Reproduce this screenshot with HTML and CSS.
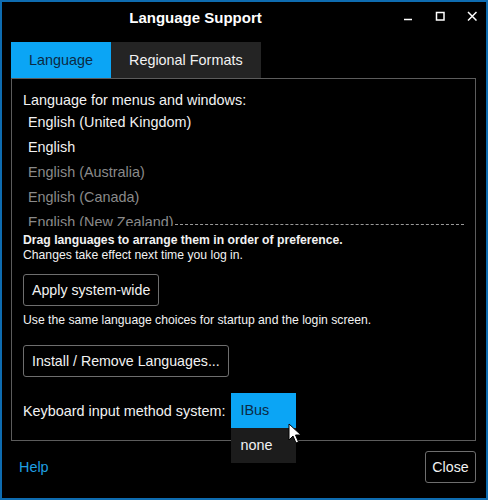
FILE: index.html
```html
<!DOCTYPE html>
<html lang="en">
<head>
    <meta charset="UTF-8">
    <title>Language Support</title>
    <link rel="stylesheet" href="styles.css">
</head>
<body>
    <div class="window">
        <div class="titlebar">
            <div class="title">Language Support</div>
            <div class="controls">
                <svg class="ctl" width="10" height="10" viewBox="0 0 10 10"><line x1="1" y1="8.5" x2="9" y2="8.5" stroke="#fff" stroke-width="1.5"/></svg>
                <svg class="ctl" width="10" height="10" viewBox="0 0 10 10"><rect x="1.5" y="1.5" width="7.5" height="7.5" fill="none" stroke="#fff" stroke-width="1.5"/></svg>
                <svg class="ctl" width="10" height="10" viewBox="0 0 10 10"><path d="M1 1 L9.5 9.5 M9.5 1 L1 9.5" stroke="#fff" stroke-width="1.5"/></svg>
            </div>
        </div>

        <div class="tabs">
            <div class="tab active">Language</div>
            <div class="tab">Regional Formats</div>
        </div>

        <div class="panel">
            <div class="label">Language for menus and windows:</div>
            <div class="lang-list">
                <div class="lang">English (United Kingdom)</div>
                <div class="lang">English</div>
                <div class="lang off">English (Australia)</div>
                <div class="lang off">English (Canada)</div>
                <div class="lang off">English (New Zealand)</div>
                <div class="drop-line"></div>
            </div>
            <div class="note bold">Drag languages to arrange them in order of preference.</div>
            <div class="note">Changes take effect next time you log in.</div>

            <button class="btn btn-apply">Apply system-wide</button>
            <div class="note note-apply">Use the same language choices for startup and the login screen.</div>

            <button class="btn btn-install">Install / Remove Languages...</button>

            <div class="im-row">
                <span class="label">Keyboard input method system:</span>
                <div class="combo">
                    <div class="menu">
                        <div class="item selected">IBus</div>
                        <div class="item">none</div>
                    </div>
                    <svg class="cursor" width="14" height="22" viewBox="0 0 14 22">
                        <path d="M1 1 L1 17 L5 13 L8 20 L10.5 19 L7.5 12 L13 12 Z" fill="#fff" stroke="#000" stroke-width="1"/>
                    </svg>
                </div>
            </div>
        </div>

        <div class="footer">
            <a class="help" href="#">Help</a>
            <button class="btn btn-close">Close</button>
        </div>
    </div>
</body>
</html>
```

FILE: styles.css
```css
body { margin: 0; background: #000; font-family: "Liberation Sans", Arial, sans-serif; color: #f2f2f2; }
.window { width: 488px; height: 500px; box-sizing: border-box; border: 2px solid #0e6cb0; background: #000; }

.titlebar { display: flex; height: 34px; }
.title { flex: 1; text-align: center; font-size: 15px; font-weight: bold; color: #fff; line-height: 32px; padding-right: 14px; }
.controls { width: 83px; display: flex; gap: 22px; padding-top: 9px; }
.ctl { display: block; }

.tabs { display: flex; margin: 6px 0 0 9px; height: 36px; }
.tab { padding: 0 18px; line-height: 36px; font-size: 14.4px; background: #242424; color: #f2f2f2; }
.tab.active { width: 64px; background: #0ba5f5; color: #0b2a44; }

.panel { margin: 0 10px 0 9px; border: 1px solid #5c5c5c; padding: 11px 11px 17px; height: 363px; box-sizing: border-box; }
.label { font-size: 14.4px; line-height: 20px; }

.lang-list { position: relative; height: 116px; overflow: hidden; }
.lang { font-size: 14.4px; line-height: 25px; padding-left: 5px; }
.lang.off { color: #8a8a8a; }
.drop-line { position: absolute; left: 152px; right: 0; top: 114px; border-top: 1px dashed #9a9a9a; }

.note { font-size: 12.2px; line-height: 15px; }
.note.bold { font-weight: bold; margin-top: 7px; }

.btn { display: block; height: 32px; padding: 0 8px; background: #000; color: #f2f2f2; border: 1px solid #6e6e6e; border-radius: 3px; font-family: inherit; font-size: 14.2px; }
.btn-apply { margin-top: 11px; }
.note-apply { margin-top: 7px; }
.btn-install { margin-top: 17px; }

.im-row { display: flex; align-items: center; margin-top: 24px; }
.combo { position: relative; width: 66px; height: 20px; margin-left: 6px; }
.menu { position: absolute; left: 0; top: -8px; width: 65px; }
.item { height: 35px; line-height: 35px; padding-left: 9px; font-size: 14.4px; background: #1c1c1c; color: #f2f2f2; }
.item.selected { background: #0ba5f5; color: #0b2a44; }
.cursor { position: absolute; left: 57px; top: 22px; }

.footer { display: flex; justify-content: space-between; align-items: center; padding: 10px 10px 0 17px; }
.help { color: #1f9fe2; text-decoration: none; font-size: 14.4px; }
.btn-close { width: 51px; padding: 0; }
```
